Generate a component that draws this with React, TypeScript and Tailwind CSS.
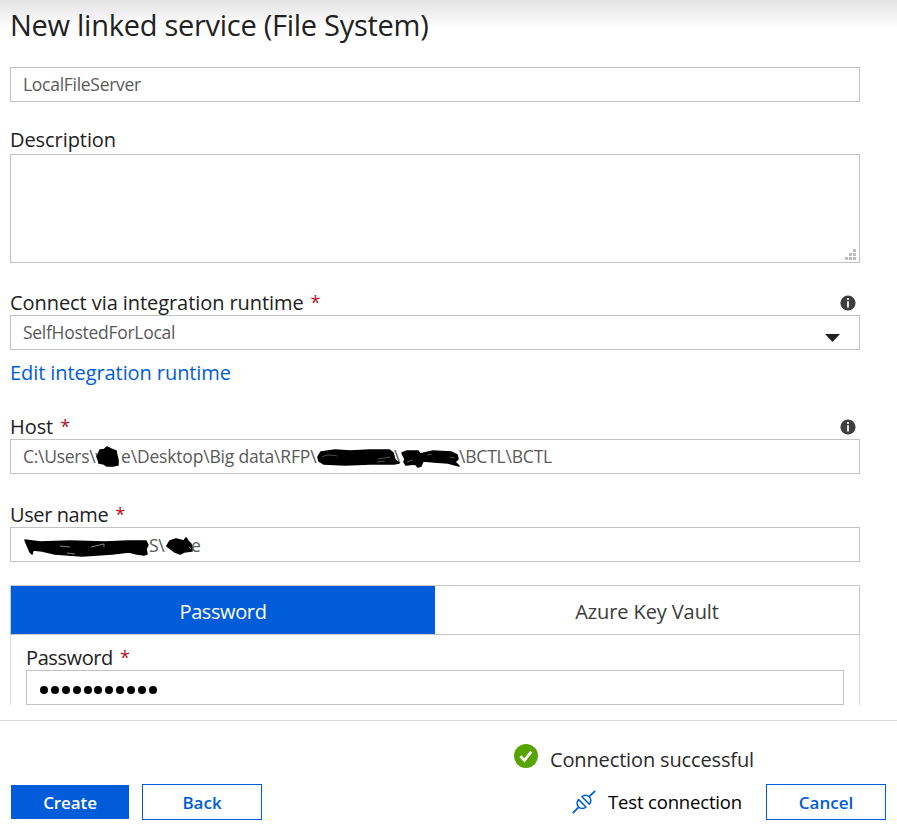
import type { ReactNode } from "react";

const BLUE = "#015cda";

function Label({
  children,
  required,
  info,
  tight,
}: {
  children: ReactNode;
  required?: boolean;
  info?: boolean;
  tight?: boolean;
}) {
  return (
    <div className="flex h-[27px] items-center text-[20px] leading-[27px] text-[#212121]">
      <span className={tight ? "pt-[2px] tracking-[-0.4px] whitespace-nowrap" : "pt-[2px] tracking-[-0.07px] whitespace-nowrap"}>
        {children}
      </span>
      {required && <span className="ml-[7px] pt-[2px] text-[18px] text-[#b5121b]">*</span>}
      {info && (
        <svg className="mt-[2px] mr-1 ml-auto" width="16" height="16" viewBox="0 0 16 16">
          <circle cx="8" cy="8" r="7.6" fill="#3f3f3f" />
          <path d="M7 3h2v2H7zM7 6.2h2V12.4H7z" fill="#e8e8e8" />
        </svg>
      )}
    </div>
  );
}

function Field({ children }: { children: ReactNode }) {
  return (
    <div className="relative flex h-[35px] items-center border border-[#c3c3c3] bg-white pl-3 text-[17.5px] tracking-[-0.28px] whitespace-pre text-[#5a5a5a]">
      {children}
    </div>
  );
}

function Check() {
  return (
    <svg width="24" height="24" viewBox="0 0 24 24">
      <circle cx="12" cy="12" r="12" fill="#57a300" />
      <path d="M6.4 12.3l4 4 7-8.6" fill="none" stroke="#fff" strokeWidth="2.8" />
    </svg>
  );
}

function Plug() {
  return (
    <svg width="24" height="24" viewBox="0 0 24 24" fill="none" stroke={BLUE} strokeWidth="1.5">
      <path d="M.8 23.2L6.4 17.4M17.4 6.4L23.2 .8" strokeWidth="1.7" />
      <path d="M6.6 9.6L14 17A5.2 5.2 0 0 1 6.6 9.6Z" strokeLinejoin="round" />
      <path d="M9.9 6.7L17.3 14.1A5.2 5.2 0 0 0 9.9 6.7Z" strokeLinejoin="round" />
    </svg>
  );
}

function HostScribbles() {
  return (
    <svg className="absolute -top-px -left-px" width="560" height="35" viewBox="10 439 560 35">
      <g stroke="#000" strokeWidth="1.6" strokeLinejoin="round">
        <path d="M97 457L100 450L104 449.5L107 447L111 449L116 451L117 456L118 460L118 465L113 466L107 466L104 464L99 463L98 459Z" />
        <path d="M318 457L321 452L335 450L350 451L370 450L389 450L393 453L395 460L399 463L394 464L370 464L345 465L324 464L319 461Z" />
        <path d="M402 453L407 451L418 451L420 454L433 451L451 452L457 455L458 459L455 462L459 466L448 463L434 462L423 461L421 466L418 467L415 464L406 465L404 462L405 459Z" />
      </g>
      <path
        d="M322 457c5-3 10-2 15-1M378 459l12-2M377 462l8-1M427 455l5-1M450 457l5 1M407 462l6-2"
        fill="none"
        stroke="#777"
        strokeWidth=".7"
      />
    </svg>
  );
}

function UserScribbles() {
  return (
    <svg className="absolute -top-px -left-px" width="220" height="35" viewBox="10 527 220 35">
      <g stroke="#000" strokeWidth="1.6" strokeLinejoin="round">
        <path d="M25 540L40 542L70 541L105 542L128 541L146 541L148 545L146 549L147 554L144 555L137 554L129 552L112 554L82 556L55 554L42 551L33 550L32 554L30 552L27 545Z" />
        <path d="M167 546L170 541L176 539L184 541L186 538L188 541L191 544L192 551L184 552L180 554L175 552L171 549Z" />
      </g>
      <path
        d="M60 546l10 1M67 553l8 1M91 547l13-3v3M189 547l2 2"
        fill="none"
        stroke="#aaa"
        strokeWidth=".8"
      />
    </svg>
  );
}

export default function App() {
  return (
    <div className="flex h-[832px] w-[897px] flex-col overflow-hidden bg-white font-['Open_Sans','Noto_Sans',sans-serif]">
      <div className="h-[720px] bg-linear-to-b from-[#e3e3e3] to-white to-[28px] pr-[37px] pl-[10px]">
        <h1 className="h-[67px] pt-[5px] text-[29px] leading-[40px] tracking-[-0.27px] text-[#212121]">
          New linked service (File System)
        </h1>
        <Field>LocalFileServer</Field>

        <div className="mt-[23px] mb-[2px]">
          <Label>Description</Label>
        </div>
        <div className="flex h-[109px] items-end justify-end border border-[#c3c3c3] p-[3px] pb-[2px]">
          <svg width="11" height="11" viewBox="0 0 11 11" fill="#bdbdbd">
            <path d="M8 0h3v3H8zM4 4h3v3H4zM8 4h3v3H8zM0 8h3v3H0zM4 8h3v3H4zM8 8h3v3H8z" />
          </svg>
        </div>

        <div className="mt-[25px]">
          <Label required info>
            Connect via integration runtime
          </Label>
        </div>
        <Field>
          SelfHostedForLocal
          <svg className="mt-[11px] mr-[19px] ml-auto" width="15" height="8" viewBox="0 0 15 8">
            <path d="M0 0h15L7.5 8z" fill="#212121" />
          </svg>
        </Field>
        <div className="mt-[9px] h-[27px] text-[20px] leading-[27px] tracking-[-0.08px] text-[#015cda]">
          Edit integration runtime
        </div>

        <div className="mt-[26px]">
          <Label required info>
            Host
          </Label>
        </div>
        <Field>
          <span className="w-[98px]">C:\Users\v</span>
          <span className="w-[203px] tracking-[-0.18px]">e\Desktop\Big data\RFP\</span>
          <span className="ml-[70px] w-[65px]">\</span>
          <span className="tracking-[-0.2px]">\BCTL\BCTL</span>
          <HostScribbles />
        </Field>

        <div className="mt-[26px]">
          <Label required tight>
            User name
          </Label>
        </div>
        <Field>
          <span className="mt-[2px] ml-[126px] w-[42px]">S\</span>
          <span className="mt-[2px]">e</span>
          <UserScribbles />
        </Field>

        <div className="mt-[23px] flex h-[50px] border border-[#c8c8c8] text-[20px]">
          <div className="flex w-1/2 items-center justify-center bg-[#015cda] pt-[3px] tracking-[-0.4px] text-white">
            Password
          </div>
          <div className="flex w-1/2 items-center justify-center pt-[3px] tracking-[-0.1px] text-[#3b3b3b]">
            Azure Key Vault
          </div>
        </div>
        <div className="h-[70px] border-x border-[#dcdcdc] px-[15px] pt-[8px]">
          <Label required tight>
            Password
          </Label>
          <Field>
            <div className="ml-[1px] flex gap-[2.9px] pt-[4px]">
              {Array.from({ length: 11 }, (_, i) => (
                <span key={i} className="size-[8px] rounded-full bg-black" />
              ))}
            </div>
          </Field>
        </div>
      </div>

      <div className="flex h-[112px] flex-col border-t border-[#dcdcdc]">
        <div className="flex h-[63px] items-start pt-[23px] pl-[514px]">
          <Check />
          <span className="mt-[2px] ml-[12px] text-[20px] leading-[27px] tracking-[-0.14px] text-[#2b2b2b]">
            Connection successful
          </span>
        </div>
        <div className="flex h-[36px] items-center pr-[11px] pl-[11px] text-[17px] font-semibold">
          <button className="h-[34px] w-[118px] bg-[#015cda] pt-[2px] tracking-[-0.1px] text-white">Create</button>
          <button className="ml-[13px] h-[36px] w-[120px] border border-[#015cda] pt-[2px] text-[#015cda]">Back</button>
          <div className="ml-auto flex items-center text-[18.5px] font-normal tracking-[-0.17px] text-black">
            <Plug />
            <span className="ml-3">Test connection</span>
          </div>
          <button className="ml-6 h-[36px] w-[120px] border border-[#015cda] pt-[2px] text-[#015cda]">Cancel</button>
        </div>
      </div>
    </div>
  );
}
